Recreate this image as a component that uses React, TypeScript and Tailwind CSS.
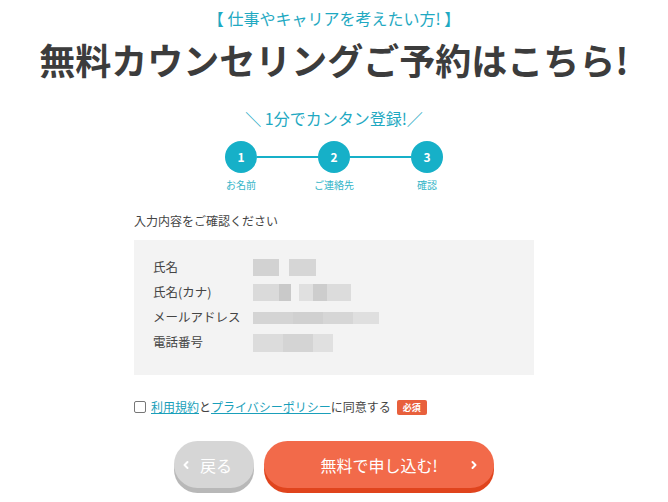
import { ChevronLeft, ChevronRight } from "lucide-react";

const STEPS = [
  { num: "1", label: "お名前" },
  { num: "2", label: "ご連絡先" },
  { num: "3", label: "確認" }
];

// blurred personal data, drawn as soft gray blocks
const ROWS: { label: string; h: string; blocks: { w: string; c: string }[] }[] = [
  {
    label: "氏名",
    h: "h-[17px]",
    blocks: [
      { w: "w-[26px]", c: "bg-[#d2d2d2]" },
      { w: "w-[10px]", c: "bg-transparent" },
      { w: "w-[27px]", c: "bg-[#d6d6d6]" }
    ]
  },
  {
    label: "氏名(カナ)",
    h: "h-[17px]",
    blocks: [
      { w: "w-[26px]", c: "bg-[#dadada]" },
      { w: "w-[12px]", c: "bg-[#c9c9c9]" },
      { w: "w-[8px]", c: "bg-transparent" },
      { w: "w-[14px]", c: "bg-[#e0e0e0]" },
      { w: "w-[14px]", c: "bg-[#cdcdcd]" },
      { w: "w-[24px]", c: "bg-[#dcdcdc]" }
    ]
  },
  {
    label: "メールアドレス",
    h: "h-[12px]",
    blocks: [
      { w: "w-[40px]", c: "bg-[#d4d4d4]" },
      { w: "w-[30px]", c: "bg-[#d0d0d0]" },
      { w: "w-[30px]", c: "bg-[#d6d6d6]" },
      { w: "w-[26px]", c: "bg-[#dfdfdf]" }
    ]
  },
  {
    label: "電話番号",
    h: "h-[18px]",
    blocks: [
      { w: "w-[30px]", c: "bg-[#dcdcdc]" },
      { w: "w-[30px]", c: "bg-[#d4d4d4]" },
      { w: "w-[20px]", c: "bg-[#e0e0e0]" }
    ]
  }
];

function Steps() {
  return (
    <div className="mt-[13px] flex justify-center">
      {STEPS.map((step, i) => (
        <div key={step.num} className="flex">
          <div className="flex w-8 flex-col items-center">
            <div className="flex h-8 w-8 items-center justify-center rounded-full bg-[#16b0c8] text-[12px] font-bold text-white">
              {step.num}
            </div>
            <div className="mt-[5px] flex w-8 justify-center whitespace-nowrap text-[10px] leading-[14px] text-[#35b5c8]">
              {step.label}
            </div>
          </div>
          {i < STEPS.length - 1 ? <div className="mt-[15px] h-[2px] w-[61px] bg-[#16b0c8]" /> : null}
        </div>
      ))}
    </div>
  );
}

export default function App() {
  return (
    <div
      className="flex min-h-[502px] w-full flex-col items-center bg-white"
      style={{ fontFamily: '"Noto Sans CJK JP", "Noto Sans", sans-serif' }}
    >
      <p className="pt-[8px] text-[16px] leading-[20px] text-[#1fa9c2]">【 仕事やキャリアを考えたい方! 】</p>
      <h1 className="mt-[9px] text-[36px] font-bold leading-[44px] text-[#3c3c3c]">
        無料カウンセリングご予約はこちら!
      </h1>
      <p className="mt-[27px] text-[16px] leading-[20px] text-[#1fa9c2]">＼ 1分でカンタン登録!／</p>

      <Steps />

      <div className="mt-[20px] w-[400px]">
        <p className="text-[12px] leading-[18px] text-[#444]">入力内容をご確認ください</p>

        <div className="mt-[10px] bg-[#f3f3f3] pb-[20px] pl-[19px] pt-[15px]">
          {ROWS.map((row) => (
            <div key={row.label} className="flex h-[25px] items-center">
              <span className="w-[100px] text-[12.5px] text-[#444]">{row.label}</span>
              <div className={`flex ${row.h} blur-[0.6px]`}>
                {row.blocks.map((b, i) => (
                  <div key={i} className={`h-full ${b.w} ${b.c}`} />
                ))}
              </div>
            </div>
          ))}
        </div>

        <label className="mt-[23px] flex h-[18px] items-center text-[12px] text-[#444]">
          <span className="mr-[5px] h-[12px] w-[12px] rounded-[2px] border border-[#777] bg-white" />
          <a className="text-[#1a9fba] underline">利用規約</a>
          <span>と</span>
          <a className="text-[#1a9fba] underline">プライバシーポリシー</a>
          <span>に同意する</span>
          <span className="ml-[6px] rounded-[2px] bg-[#e8603c] px-[6px] text-[9px] font-bold leading-[15px] text-white">
            必須
          </span>
        </label>
      </div>

      <div className="mt-[25px] flex gap-[10px]">
        <button
          type="button"
          className="flex h-[47px] w-[80px] items-center rounded-full bg-[#d6d6d6] pl-[6px] text-[16px] text-white shadow-[0_5px_0_#b8b8b8]"
        >
          <ChevronLeft className="h-3 w-3" strokeWidth={4} />
          <span className="ml-[8px]">戻る</span>
        </button>
        <button
          type="button"
          className="relative flex h-[47px] w-[230px] items-center justify-center rounded-full bg-[#f26a4a] text-[16px] text-white shadow-[0_5px_0_#e0441d]"
        >
          無料で申し込む!
          <ChevronRight className="absolute right-[14px] top-[18px] h-3 w-3" strokeWidth={4} />
        </button>
      </div>
    </div>
  );
}
